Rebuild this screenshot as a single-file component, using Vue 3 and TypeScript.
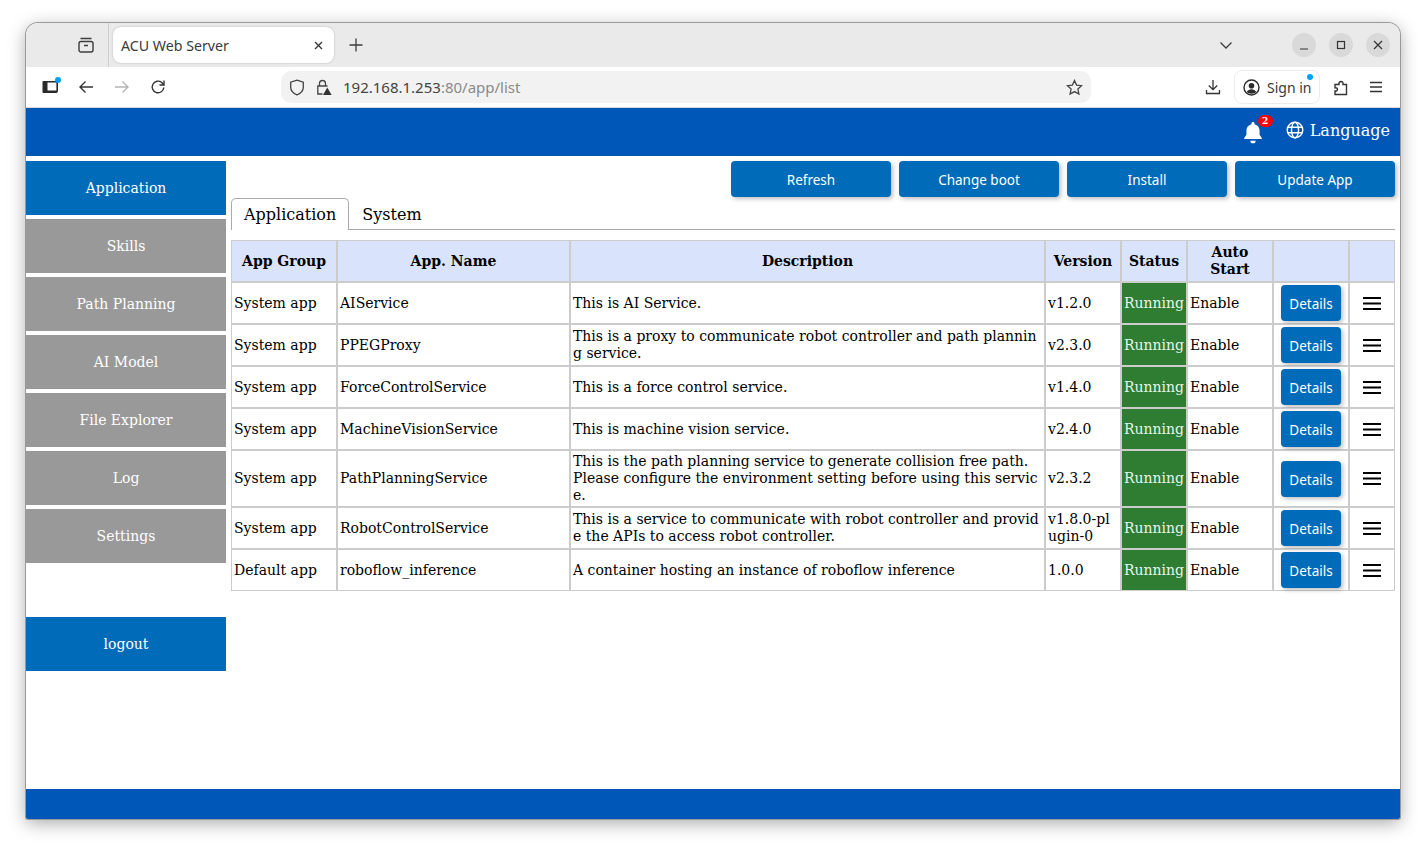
<script setup lang="ts">
interface AppRow {
  group: string
  name: string
  description: string
  version: string
}

const sideItems = ['Application', 'Skills', 'Path Planning', 'AI Model', 'File Explorer', 'Log', 'Settings']
const actions = ['Refresh', 'Change boot', 'Install', 'Update App']

const rows: AppRow[] = [
  { group: 'System app', name: 'AIService', description: 'This is AI Service.', version: 'v1.2.0' },
  { group: 'System app', name: 'PPEGProxy', description: 'This is a proxy to communicate robot controller and path planning service.', version: 'v2.3.0' },
  { group: 'System app', name: 'ForceControlService', description: 'This is a force control service.', version: 'v1.4.0' },
  { group: 'System app', name: 'MachineVisionService', description: 'This is machine vision service.', version: 'v2.4.0' },
  { group: 'System app', name: 'PathPlanningService', description: 'This is the path planning service to generate collision free path.\nPlease configure the environment setting before using this service.', version: 'v2.3.2' },
  { group: 'System app', name: 'RobotControlService', description: 'This is a service to communicate with robot controller and provide the APIs to access robot controller.', version: 'v1.8.0-plugin-0' },
  { group: 'Default app', name: 'roboflow_inference', description: 'A container hosting an instance of roboflow inference', version: '1.0.0' }
]
</script>

<template>
  <div class="page">
    <div class="window">
      <!-- browser chrome -->
      <div class="tabstrip">
        <div class="tab-side">
          <svg width="16" height="16" viewBox="0 0 16 16" fill="none" stroke="#3d3d3d" stroke-width="1.4">
            <path d="M2.500 1.500h11" />
            <rect x="1" y="4.500" width="14" height="10.500" rx="2" />
            <path d="M6 8.500h4" />
          </svg>
        </div>
        <div class="tab">
          <span>ACU Web Server</span>
          <svg width="9" height="9" viewBox="0 0 9 9" stroke="#333" stroke-width="1.3"><path d="M1 1l7 7M8 1l-7 7" /></svg>
        </div>
        <svg class="newtab" width="14" height="14" viewBox="0 0 14 14" stroke="#3d3d3d" stroke-width="1.3"><path d="M7 0.500v13M0.500 7h13" /></svg>
        <div class="strip-right">
          <svg class="chev" width="12" height="7" viewBox="0 0 12 7" fill="none" stroke="#3d3d3d" stroke-width="1.3"><path d="M0.500 0.500L6 6l5.500-5.500" /></svg>
          <div class="winbtn">
            <svg width="10" height="10" viewBox="0 0 10 10" stroke="#333" stroke-width="1.2"><path d="M1 9h8" /></svg>
          </div>
          <div class="winbtn">
            <svg width="10" height="10" viewBox="0 0 10 10" fill="none" stroke="#333" stroke-width="1.2"><rect x="1.500" y="1.500" width="7" height="7" /></svg>
          </div>
          <div class="winbtn">
            <svg width="10" height="10" viewBox="0 0 10 10" stroke="#333" stroke-width="1.2"><path d="M1 1l8 8M9 1l-8 8" /></svg>
          </div>
        </div>
      </div>

      <div class="toolbar">
        <div class="nav-icons">
          <span class="sidebar-ico">
            <svg width="16" height="12" viewBox="0 0 16 12" fill="none" stroke="#2a2a2a" stroke-width="1.6">
              <path d="M2 .800h11.500a1.700 1.700 0 0 1 1.700 1.700v7a1.700 1.700 0 0 1-1.700 1.700H2z" />
              <path d="M.500 .300h5v11.400h-5z" fill="#2a2a2a" stroke="none" />
              <path d="M5 10.500h10" stroke-width="2" />
            </svg>
            <i class="dot"></i>
          </span>
          <svg width="16" height="14" viewBox="0 0 16 14" fill="none" stroke="#333" stroke-width="1.4"><path d="M15 7H2M7.500 1.500L2 7l5.500 5.500" /></svg>
          <svg width="16" height="14" viewBox="0 0 16 14" fill="none" stroke="#b5b5b5" stroke-width="1.4"><path d="M1 7h13M8.500 1.500L14 7l-5.500 5.500" /></svg>
          <svg width="16" height="16" viewBox="0 0 16 16" fill="none" stroke="#333" stroke-width="1.4"><path d="M13.800 8.500A5.800 5.800 0 1 1 11.700 3.500L14 6" /><path d="M14 1.500V6H9.500" /></svg>
        </div>
        <div class="urlbar">
          <svg width="16" height="17" viewBox="0 0 16 17" fill="none" stroke="#444" stroke-width="1.3"><path d="M8 1.200l6.300 2v5c0 3.600-2.700 6.200-6.300 7.600-3.600-1.400-6.300-4-6.300-7.600v-5z" /></svg>
          <svg width="16" height="17" viewBox="0 0 16 17" fill="none" stroke="#444" stroke-width="1.3">
            <path d="M3.500 7V4.500a3 3 0 0 1 6 0V7" />
            <path d="M6.500 15H1.800V7h9.700" />
            <path d="M11.300 8.500l4.300 7.500H7z" fill="#333" stroke="none" />
          </svg>
          <span class="url"><b>192.168.1.253</b>:80/app/list</span>
          <svg class="star" width="17" height="17" viewBox="0 0 17 17" fill="none" stroke="#444" stroke-width="1.3"><path d="M8.500 1.500l2.100 4.600 5 .6-3.700 3.400 1 5-4.400-2.500-4.400 2.500 1-5L1.400 6.700l5-.6z" /></svg>
        </div>
        <div class="tool-right">
          <svg width="16" height="16" viewBox="0 0 16 16" fill="none" stroke="#333" stroke-width="1.3"><path d="M8 1v9.500M3.800 6.500L8 10.700l4.200-4.200M1.500 11v3.500h13V11" /></svg>
          <div class="signin">
            <svg width="17" height="17" viewBox="0 0 17 17"><circle cx="8.500" cy="8.500" r="7.500" fill="none" stroke="#2b2b2b" stroke-width="1.400" /><circle cx="8.500" cy="6.700" r="2.800" fill="#2b2b2b" /><path d="M3.800 13c1-2 2.700-2.800 4.700-2.800s3.700.8 4.700 2.800c-1.300 1.200-2.900 1.700-4.700 1.700s-3.400-.5-4.700-1.700z" fill="#2b2b2b" /></svg>
            <span>Sign in</span>
            <i class="dot"></i>
          </div>
          <svg width="16" height="17" viewBox="0 0 16 17" fill="none" stroke="#333" stroke-width="1.400"><path d="M2 5.500h4C5 1.500 11 1.500 10 5.500h3.500V15.500H2V12c3.300 .5 3.300-3.800 0-3.200z" /></svg>
          <svg class="hamb" width="14" height="12" viewBox="0 0 14 12" stroke="#333" stroke-width="1.300"><path d="M1 1.500h12M1 6h12M1 10.500h12" /></svg>
        </div>
      </div>

      <!-- page content -->
      <header class="app-header">
        <span class="bell">
          <svg width="22" height="23" viewBox="0 0 20 21" fill="#fff">
            <path d="M10 1c.8 0 1.400.6 1.400 1.400v.5c2.900.7 4.600 3 4.600 6v3.600l2 3v.9H2v-.9l2-3V8.900c0-3 1.700-5.300 4.600-6v-.5C8.600 1.600 9.200 1 10 1z" />
            <path d="M7.600 18h4.800a2.400 2.400 0 0 1-4.800 0z" />
          </svg>
          <em class="badge">2</em>
        </span>
        <span class="lang">
          <svg width="18" height="18" viewBox="0 0 18 18" fill="none" stroke="#fff" stroke-width="1.400">
            <circle cx="9" cy="9" r="7.800" />
            <ellipse cx="9" cy="9" rx="3.500" ry="7.800" />
            <path d="M1.800 6.200h14.400M1.800 11.800h14.400" />
          </svg>
          Language
        </span>
      </header>

      <div class="body">
        <nav class="sidebar">
          <a v-for="(item, i) in sideItems" :key="item" class="side-item" :class="{ active: i === 0 }">{{ item }}</a>
          <a class="side-item active logout">logout</a>
        </nav>

        <main class="content">
          <div class="actions">
            <button v-for="a in actions" :key="a" class="btn action">{{ a }}</button>
          </div>
          <div class="tabs">
            <div class="page-tab selected">Application</div>
            <div class="page-tab">System</div>
          </div>
          <table class="apps">
            <colgroup>
              <col class="c-group" />
              <col class="c-name" />
              <col class="c-desc" />
              <col class="c-ver" />
              <col class="c-status" />
              <col class="c-auto" />
              <col class="c-details" />
              <col class="c-menu" />
            </colgroup>
            <thead>
              <tr>
                <th>App Group</th>
                <th>App. Name</th>
                <th>Description</th>
                <th>Version</th>
                <th>Status</th>
                <th>Auto Start</th>
                <th></th>
                <th></th>
              </tr>
            </thead>
            <tbody>
              <tr v-for="row in rows" :key="row.name">
                <td>{{ row.group }}</td>
                <td>{{ row.name }}</td>
                <td class="wrap">{{ row.description }}</td>
                <td class="wrap">{{ row.version }}</td>
                <td class="status">Running</td>
                <td>Enable</td>
                <td><button class="btn details">Details</button></td>
                <td>
                  <svg class="menu" width="18" height="13" viewBox="0 0 18 13" fill="#000"><path d="M0 0h18v2H0zM0 5.500h18v2H0zM0 11h18v2H0z" /></svg>
                </td>
              </tr>
            </tbody>
          </table>
        </main>
      </div>

      <footer class="app-footer"></footer>
    </div>
  </div>
</template>

<style>
html,
body {
  margin: 0;
  background: #fff;
}
</style>

<style scoped>
.page {
  width: 1426px;
  height: 848px;
  padding: 23px 26px 29px;
  box-sizing: border-box;
  overflow: hidden;
  background: #fff;
  font-family: "DejaVu Serif", serif;
}

.window {
  height: 796px;
  display: flex;
  flex-direction: column;
  background: #fff;
  border-radius: 12px 12px 2px 2px;
  overflow: hidden;
  box-shadow: 0 0 0 1px #9a9a9a, 0 4px 18px rgba(0, 0, 0, 0.35);
}

.tabstrip {
  height: 44px;
  flex: none;
  display: flex;
  align-items: center;
  background: #eaeaea;
  font-family: "Noto Sans", sans-serif;
}

.tab-side {
  width: 83px;
  height: 44px;
  flex: none;
  box-sizing: border-box;
  padding-right: 14px;
  display: flex;
  align-items: center;
  justify-content: flex-end;
  border-right: 1px solid #cfcfcf;
}

.tab {
  width: 221px;
  height: 36px;
  margin-left: 4px;
  padding: 0 11px 0 8px;
  box-sizing: border-box;
  display: flex;
  align-items: center;
  justify-content: space-between;
  background: #fff;
  border-radius: 8px;
  box-shadow: 0 0 2px rgba(0, 0, 0, 0.25);
  color: #3a3a3a;
  font-size: 14.2px;
}

.newtab {
  margin-left: 15px;
}

.strip-right {
  margin-left: auto;
  padding-right: 10px;
  display: flex;
  align-items: center;
  gap: 13px;
}

.chev {
  margin-right: 47px;
}

.winbtn {
  width: 24px;
  height: 24px;
  display: flex;
  align-items: center;
  justify-content: center;
  border-radius: 50%;
  background: #d9d9d9;
}

.toolbar {
  height: 41px;
  flex: none;
  display: flex;
  align-items: center;
  background: #fff;
  border-bottom: 1px solid #d8d8d8;
  box-sizing: border-box;
  font-family: "Noto Sans", sans-serif;
}

.nav-icons {
  width: 255px;
  flex: none;
  padding-left: 16px;
  box-sizing: border-box;
  display: flex;
  align-items: center;
  gap: 20px;
}

.sidebar-ico {
  position: relative;
  display: flex;
}

.dot {
  position: absolute;
  top: -4px;
  right: -3px;
  width: 6px;
  height: 6px;
  border-radius: 50%;
  background: #00a2f5;
}

.urlbar {
  width: 810px;
  height: 32px;
  flex: none;
  padding: 0 8px;
  box-sizing: border-box;
  display: flex;
  align-items: center;
  gap: 11px;
  background: #f2f2f2;
  border-radius: 10px;
}

.url {
  font-size: 15px;
  color: #8a8a8a;
}

.url b {
  font-weight: 400;
  color: #444;
}

.star {
  margin-left: auto;
}

.tool-right {
  flex: 1;
  padding-left: 114px;
  display: flex;
  align-items: center;
  gap: 13px;
  box-sizing: border-box;
}

.hamb {
  margin-left: 7px;
}

.signin {
  position: relative;
  width: 86px;
  height: 34px;
  flex: none;
  padding-left: 8px;
  box-sizing: border-box;
  display: flex;
  align-items: center;
  gap: 7px;
  border: 1px solid #ececec;
  border-radius: 8px;
  color: #3a3a3a;
  font-size: 14px;
}

.signin .dot {
  top: 3px;
  right: 6px;
}

.app-header {
  height: 48px;
  flex: none;
  padding-right: 10px;
  display: flex;
  align-items: center;
  justify-content: flex-end;
  gap: 22px;
  background: #0057b8;
  color: #fff;
  font-size: 16px;
}

.bell {
  position: relative;
  display: flex;
}

.badge {
  position: absolute;
  top: -6px;
  right: -9px;
  width: 15px;
  height: 12px;
  border-radius: 7px;
  background: #f00;
  color: #fff;
  font-size: 9px;
  font-style: normal;
  font-weight: 700;
  line-height: 12px;
  text-align: center;
}

.lang {
  display: flex;
  align-items: center;
  gap: 6px;
  padding-bottom: 4px;
}

.body {
  flex: 1;
  display: flex;
  min-height: 0;
}

.sidebar {
  width: 200px;
  flex: none;
  padding-top: 5px;
  display: flex;
  flex-direction: column;
  gap: 4px;
}

.side-item {
  height: 54px;
  flex: none;
  display: flex;
  align-items: center;
  justify-content: center;
  background: #999;
  color: #fff;
  font-size: 14px;
}

.side-item.active {
  background: #006bb8;
}

.side-item.logout {
  margin-top: 50px;
}

.content {
  flex: 1;
  min-width: 0;
  padding: 5px 5px 0;
}

.actions {
  display: flex;
  justify-content: flex-end;
  gap: 8px;
}

.btn {
  padding: 2px 0 0;
  border: 0;
  background: #006bb8;
  color: #fff;
  font-family: "Noto Sans", sans-serif;
  font-size: 13.5px;
  box-shadow: 2px 2px 4px rgba(0, 0, 0, 0.25);
}

.action {
  width: 160px;
  height: 36px;
  border-radius: 4px;
}

.tabs {
  height: 32px;
  margin-top: 1px;
  display: flex;
  border-bottom: 1px solid #aaa;
  box-sizing: border-box;
  font-size: 16px;
  color: #000;
}

.page-tab {
  height: 32px;
  padding: 0 13px;
  box-sizing: border-box;
  line-height: 33px;
}

.page-tab.selected {
  padding: 0 12px;
  background: #fff;
  border: 1px solid #aaa;
  border-bottom: 0;
  border-radius: 5px 5px 0 0;
  line-height: 31px;
}

.apps {
  width: 1164px;
  margin-top: 10px;
  table-layout: fixed;
  border-collapse: separate;
  border-spacing: 0;
  font-size: 14px;
  line-height: 17px;
  color: #000;
}

.c-group { width: 106px; }
.c-name { width: 233px; }
.c-desc { width: 475px; }
.c-ver { width: 76px; }
.c-status { width: 66px; }
.c-auto { width: 86px; }
.c-details { width: 76px; }
.c-menu { width: 46px; }

.apps th,
.apps td {
  padding: 2px;
  border: 1px solid #ccc;
  height: 42px;
  box-sizing: border-box;
}

.apps th {
  background: #d9e4fc;
  font-weight: 700;
  text-align: center;
}

.wrap {
  white-space: pre-line;
  word-break: break-all;
}

.status {
  background: #2e7d32;
  color: #e8f5e9;
  white-space: nowrap;
}

.details {
  display: block;
  width: 60px;
  height: 36px;
  margin-left: 5px;
  border-radius: 4px;
}

.menu {
  display: block;
  margin: 0 auto;
}

.app-footer {
  height: 30px;
  flex: none;
  background: #0057b8;
}
</style>
